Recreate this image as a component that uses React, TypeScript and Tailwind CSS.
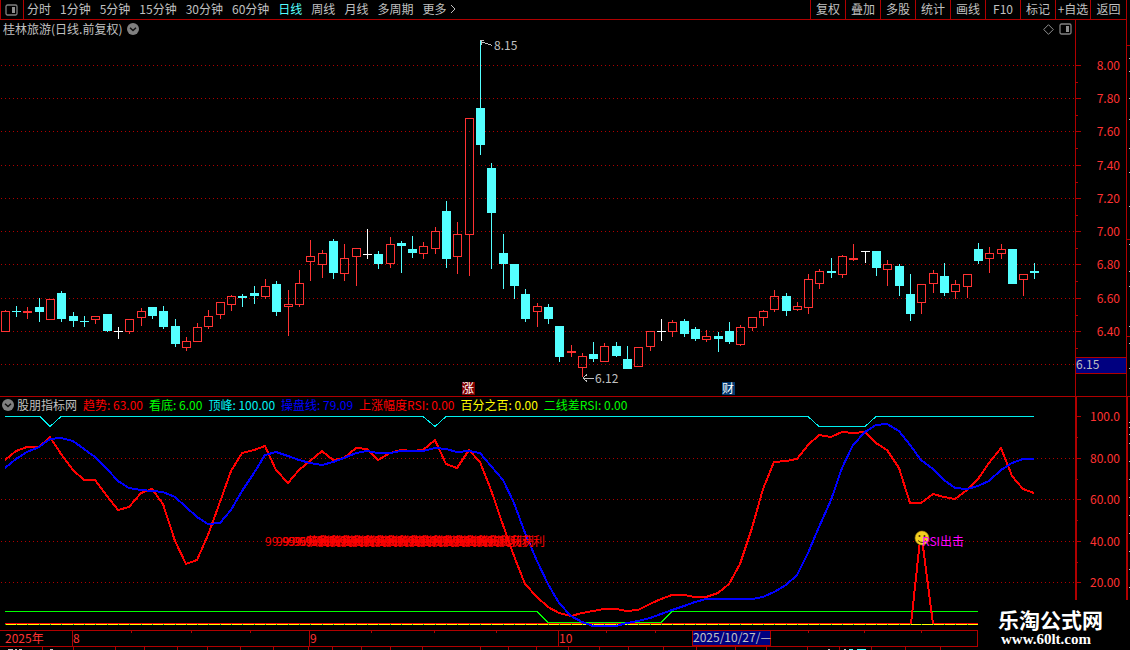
import React, { useState } from "react";

// r = rising (hollow red), c = falling (solid cyan), w = flat (white)
type Candle = ["r" | "c" | "w", number, number, number, number];

// kind, high, body top, body bottom, low
const candles: Candle[] = [
  ["r", 310, 311, 331, 331], ["c", 306, 311, 311, 316], ["r", 307, 311, 312, 318], ["c", 298, 307, 311, 321],
  ["r", 299, 299, 319, 319], ["c", 291, 293, 318, 321], ["c", 312, 316, 320, 326], ["c", 316, 321, 321, 326],
  ["r", 316, 316, 319, 323], ["c", 314, 314, 330, 331], ["w", 327, 331, 331, 338], ["r", 319, 319, 331, 333],
  ["r", 308, 311, 317, 325], ["c", 307, 307, 315, 318], ["c", 306, 311, 326, 328], ["c", 319, 326, 343, 346],
  ["r", 337, 341, 347, 350], ["r", 323, 327, 341, 341], ["r", 310, 316, 326, 328], ["r", 302, 302, 314, 318],
  ["r", 295, 296, 304, 310], ["c", 294, 296, 297, 306], ["c", 286, 293, 295, 303], ["r", 279, 286, 296, 298],
  ["c", 281, 284, 311, 315], ["r", 290, 304, 306, 335], ["r", 270, 283, 304, 306], ["r", 240, 256, 261, 280],
  ["r", 250, 253, 264, 277], ["c", 239, 241, 272, 278], ["r", 244, 258, 273, 280], ["r", 248, 248, 256, 285],
  ["w", 229, 254, 254, 258], ["c", 251, 254, 263, 268], ["r", 237, 244, 263, 267], ["c", 241, 243, 245, 272],
  ["c", 236, 249, 252, 257], ["r", 242, 246, 253, 258], ["r", 227, 231, 248, 253], ["c", 201, 211, 258, 267],
  ["r", 222, 234, 256, 273], ["r", 118, 118, 234, 275], ["c", 41, 108, 144, 154], ["c", 163, 168, 212, 268],
  ["c", 234, 253, 263, 288], ["c", 264, 264, 285, 298], ["c", 289, 294, 318, 321], ["r", 303, 306, 311, 326],
  ["c", 304, 307, 318, 323], ["c", 326, 326, 356, 361], ["r", 345, 351, 352, 356], ["r", 353, 356, 367, 376],
  ["c", 342, 354, 358, 361], ["r", 343, 346, 361, 361], ["c", 342, 346, 355, 356], ["c", 346, 359, 368, 368],
  ["r", 347, 347, 366, 366], ["r", 331, 331, 346, 350], ["w", 319, 331, 331, 340], ["r", 320, 322, 331, 336],
  ["c", 319, 321, 333, 336], ["c", 327, 329, 338, 340], ["r", 330, 336, 339, 341], ["c", 332, 336, 338, 351],
  ["c", 322, 331, 341, 343], ["r", 325, 327, 344, 345], ["r", 317, 317, 327, 330], ["r", 310, 311, 317, 325],
  ["r", 290, 296, 309, 311], ["c", 293, 296, 310, 315], ["r", 302, 306, 309, 310], ["r", 274, 279, 307, 313],
  ["r", 269, 271, 283, 288], ["c", 258, 271, 272, 277], ["r", 255, 256, 274, 277], ["r", 244, 258, 259, 260],
  ["w", 251, 251, 251, 262], ["c", 251, 251, 267, 275], ["r", 260, 264, 269, 285], ["c", 264, 266, 285, 295],
  ["c", 274, 294, 313, 320], ["r", 284, 284, 302, 313], ["r", 270, 273, 283, 292], ["c", 263, 276, 292, 295],
  ["r", 280, 284, 291, 298], ["r", 274, 274, 286, 297], ["c", 243, 249, 260, 263], ["r", 247, 253, 258, 272],
  ["r", 244, 249, 253, 258], ["c", 249, 249, 283, 283], ["r", 274, 274, 279, 295], ["c", 263, 271, 272, 278],
];

const trend = [
  460, 451, 447, 447, 437, 454, 470, 480, 480, 496, 510, 507, 493, 489, 504, 541, 564, 560, 535, 502, 471, 453, 450,
  446, 470, 483, 470, 461, 451, 460, 458, 448, 449, 460, 453, 450, 451, 450, 440, 464, 468, 450, 462, 490, 525, 556,
  584, 597, 607, 613, 616, 613, 611, 609, 609, 611, 610, 604, 599, 595, 595, 597, 597, 593, 584, 564, 528, 489, 462,
  461, 459, 445, 435, 437, 432, 433, 432, 443, 450, 468, 503, 503, 494, 497, 499, 490, 479, 463, 448, 476, 489, 493,
];

const control = [
  468, 459, 452, 447, 439, 438, 441, 449, 457, 469, 481, 488, 490, 491, 492, 497, 507, 517, 524, 523, 510, 491, 473,
  455, 452, 456, 460, 463, 465, 462, 458, 453, 451, 453, 453, 451, 451, 451, 448, 449, 452, 451, 453, 466, 480, 503,
  533, 561, 584, 603, 616, 622, 626, 626, 626, 623, 621, 618, 614, 610, 606, 602, 599, 599, 599, 599, 599, 597, 592,
  585, 575, 553, 527, 500, 468, 445, 432, 425, 424, 431, 445, 460, 469, 480, 488, 489, 486, 481, 470, 463, 459, 459,
];

const priceLabels: [string, number][] = [
  ["8.00", 65], ["7.80", 98], ["7.60", 131], ["7.40", 165], ["7.20", 198],
  ["7.00", 231], ["6.80", 264], ["6.60", 298], ["6.40", 331],
];

const indicatorLabels: [string, number][] = [
  ["100.0", 416], ["80.00", 458], ["60.00", 499], ["40.00", 541], ["20.00", 582],
];

const periods = ["分时", "1分钟", "5分钟", "15分钟", "30分钟", "60分钟", "日线", "周线", "月线", "多周期"];
const tools = ["复权", "叠加", "多股", "统计", "画线", "F10", "标记", "+自选", "返回"];

const readings = [
  { text: "趋势: 63.00", color: "text-[#ff0000]" },
  { text: "看底: 6.00", color: "text-[#00ff00]" },
  { text: "顶峰: 100.00", color: "text-[#00f0f0]" },
  { text: "操盘线: 79.09", color: "text-[#0000ff]" },
  { text: "上涨幅度RSI: 0.00", color: "text-[#ff0000]" },
  { text: "百分之百: 0.00", color: "text-[#ffff00]" },
  { text: "二线差RSI: 0.00", color: "text-[#00ff00]" },
];

const dateTicks = [131, 191, 250, 371, 434, 496, 606, 655, 808, 864, 921];
const stripTicks = [
  42, 73, 115, 144, 177, 207, 240, 273, 308, 332, 361, 390, 422, 480, 508, 536, 568, 599, 628, 663, 696, 735, 766,
  807, 839, 871, 905, 940,
];

const colors = { r: "#ff3232", c: "#54ffff", w: "#ffffff" };
const LINE = "#b00000";

const cx = (i: number) => Math.floor(5.3 + i * 11.315);
const toPoints = (ys: number[]) => ys.map((y, i) => `${cx(i)},${y}`).join(" ");

function PaneIcon() {
  return (
    <svg width="13" height="12" viewBox="0 0 13 12">
      <rect x="1" y="1" width="11" height="10" rx="1.5" fill="none" stroke="#808080" strokeWidth="1.3" />
      <rect x="7" y="3" width="3" height="6" fill="#909090" />
    </svg>
  );
}

function ChevronBadge() {
  return (
    <svg width="12" height="12" viewBox="0 0 12 12">
      <circle cx="6" cy="6" r="6" fill="#808080" />
      <path d="M3 4.7 L6 7.5 L9 4.7" fill="none" stroke="#101010" strokeWidth="1.5" />
    </svg>
  );
}

function GridLine({ y }: { y: number }) {
  return <line x1="1" x2="1075" y1={y + 0.5} y2={y + 0.5} stroke={LINE} strokeDasharray="1 3" shapeRendering="crispEdges" />;
}

function CandleShape({ data, x }: { data: Candle; x: number }) {
  const [kind, high, top, bottom, low] = data;
  const color = colors[kind];
  const hollow = kind === "r" && bottom - top > 1;
  return (
    <g fill={color}>
      {hollow ? (
        <>
          <rect x={x} y={high} width="1" height={top - high} />
          <rect x={x} y={bottom} width="1" height={low - bottom + 1} />
          <rect x={x - 3.5} y={top + 0.5} width="8" height={bottom - top} fill="none" stroke={color} />
        </>
      ) : (
        <>
          <rect x={x} y={high} width="1" height={low - high + 1} />
          <rect x={x - 4} y={top} width="9" height={bottom - top + 1} />
        </>
      )}
    </g>
  );
}

function PriceChart() {
  return (
    <svg viewBox="0 40 1130 356" className="block w-full overflow-visible text-[12px]">
      {priceLabels.map(([label, y]) => (
        <g key={label}>
          <GridLine y={y} />
          <rect x="1076" y={y} width="5" height="1" fill={LINE} />
          <rect x="1076" y={y + 17} width="2" height="1" fill={LINE} />
          <text x="1120" y={y + 5} textAnchor="end" fill="#ff3232">{label}</text>
        </g>
      ))}
      <GridLine y={364} />
      <rect x="1075" y="40" width="1" height="356" fill={LINE} />
      <rect x="1126" y="40" width="1" height="356" fill={LINE} />

      <g shapeRendering="crispEdges">
        {candles.map((c, i) => (
          <CandleShape key={i} data={c} x={cx(i)} />
        ))}
      </g>

      {/* highest and lowest price */}
      <g fill="none" stroke="#c0c0c0" shapeRendering="crispEdges">
        <path d="M481 41.5 L492 45.5 M480 40.5 H484 M481 41 V45" />
        <path d="M583 378.5 H594 M583 378 L587 374.5 M583 378 L587 381.5" />
      </g>
      <text x="494" y="50" fill="#c0c0c0">8.15</text>
      <text x="595" y="383" fill="#c0c0c0">6.12</text>

      <rect x="462" y="382" width="13" height="13" fill="#800000" />
      <text x="468" y="393" textAnchor="middle" fill="#ffffff">涨</text>
      <rect x="722" y="382" width="13" height="13" fill="#003870" />
      <text x="728" y="393" textAnchor="middle" fill="#ffffff">财</text>

      <rect x="1076" y="357" width="50" height="17" fill={LINE} />
      <rect x="1076" y="358" width="50" height="15" fill="#000080" />
      <text x="1076" y="369" fill="#c0c0c0">6.15</text>

      <g fill="#c0c0c0">
        {[58, 71, 98, 119, 148, 172, 206, 244, 271, 286, 326, 343, 368].map((y) => (
          <rect key={y} x="1129" y={y} width="1" height="1" />
        ))}
      </g>
      <rect x="1127" y="45" width="3" height="1" fill={LINE} />
      <rect x="1127" y="239" width="3" height="1" fill={LINE} />
      <rect x="1127" y="336" width="3" height="1" fill={LINE} />
    </svg>
  );
}

function IndicatorChart() {
  return (
    <svg viewBox="0 413 1130 237" className="block w-full overflow-visible text-[12px]">
      {indicatorLabels.map(([label, y], i) => (
        <g key={label}>
          {i > 0 && <GridLine y={y} />}
          <rect x="1077" y={y} width="4" height="1" fill={LINE} />
          <rect x="1077" y={y + 21} width="1" height="1" fill={LINE} />
          <text x="1120" y={y + 5} textAnchor="end" fill="#ff3232">{label}</text>
        </g>
      ))}
      <rect x="1075" y="413" width="2" height="187" fill={LINE} />
      <rect x="1126" y="413" width="2" height="187" fill={LINE} />
      <g fill="#c0c0c0">
        {[422, 427, 434, 443, 461, 479, 497, 515, 533, 551, 569, 587].map((y) => (
          <rect key={y} x="1129" y={y} width="1" height="1" />
        ))}
      </g>

      <g fill="none" shapeRendering="crispEdges">
        <polyline
          stroke="#00f0f0"
          points="5,416.5 40,416.5 50,426.5 61,416.5 423,416.5 435,426.5 446,416.5 808,416.5 819,426.5 865,426.5 876,416.5 1034,416.5"
        />
        <polyline stroke="#00ff00" points="5,611.5 537,611.5 548,622.5 661,622.5 672,611.5 978,611.5" />
        <path d="M5 624.5 H978" stroke="#ffff00" />
        <polyline stroke="#ff0000" points="5,623.5 910,623.5" />
        <polyline stroke="#ff0000" points="933,623.5 978,623.5" />
        <polyline stroke="#ff0000" strokeWidth="2" points={toPoints(trend)} />
        <polyline stroke="#0000ff" strokeWidth="2" points={toPoints(control)} />
        <polyline stroke="#ff0000" strokeWidth="2" points="911,624 921,531 933,624" />
      </g>
      {candles.slice(0, 86).map((_, i) => (
        <rect key={i} x={cx(i)} y="624" width="1" height="1" fill="#00c800" />
      ))}

      {candles.slice(23, 43).map((_, i) => (
        <text key={i} x={cx(i + 23)} y="546" fill="#ff0000">99.95%获利</text>
      ))}

      <circle cx="922" cy="538" r="7" fill="#f4d020" stroke="#a08010" strokeWidth="0.6" />
      <circle cx="919.5" cy="536" r="1" fill="#503000" />
      <circle cx="924.5" cy="536" r="1" fill="#503000" />
      <path d="M918 540.5 Q922 544.5 926 540.5" fill="none" stroke="#503000" />
      <text x="922" y="546" fill="#ff00ff">RSI出击</text>

      {/* date axis */}
      <g fill={LINE}>
        <rect x="0" y="630" width="978" height="1" />
        <rect x="0" y="646" width="978" height="1" />
        <rect x="977" y="630" width="1" height="17" />
        <rect x="72" y="631" width="1" height="15" />
        <rect x="309" y="631" width="1" height="15" />
        <rect x="558" y="631" width="1" height="15" />
        {dateTicks.map((x) => (
          <rect key={x} x={x} y="631" width="1" height="2" />
        ))}
        {stripTicks.map((x) => (
          <rect key={x} x={x} y="647" width="1" height="3" />
        ))}
      </g>
      <g fill="#ff3232">
        <text x="5" y="643">2025年</text>
        <text x="73" y="643">8</text>
        <text x="310" y="643">9</text>
        <text x="559" y="643">10</text>
      </g>
      <rect x="692" y="631" width="79" height="15" fill={LINE} />
      <rect x="693" y="631" width="77" height="14" fill="#000080" />
      <text x="693" y="642" fill="#c0c0c0">2025/10/27/—</text>
      <path d="M8 649.5 H13 M15 649.5 H17 M19 649.5 H22 M50 649.5 H53 M828 649.5 H830 M844 649.5 H846" stroke="#c0c0c0" />
      <path d="M849 649.5 H853 M857 649.5 H866" stroke="#54ffff" />
    </svg>
  );
}

export default function App() {
  const [period, setPeriod] = useState("日线");

  return (
    <main className="relative min-h-screen overflow-hidden bg-black font-['Noto_Sans_CJK_SC',sans-serif] text-[12px] leading-[16px] text-[#c0c0c0]">
      <nav className="flex h-5 whitespace-nowrap">
        <div className="flex flex-1 items-stretch border-b border-l border-[#b00000]">
          <button type="button" aria-label="侧栏" className="flex w-[23px] items-center justify-center border-r border-[#b00000] pr-[2px]">
            <PaneIcon />
          </button>
          <div className="flex flex-1 items-center gap-[9px] pb-[2px] pl-[3px]">
            {periods.map((p) => (
              <button
                key={p}
                type="button"
                onClick={() => setPeriod(p)}
                className={p === period ? "text-[#54ffff]" : ""}
              >
                {p}
              </button>
            ))}
            <button type="button" className="flex items-center gap-1">
              更多
              <svg width="6" height="10" viewBox="0 0 6 10" fill="none" stroke="#c0c0c0">
                <path d="M1 1 L5 5 L1 9" />
              </svg>
            </button>
          </div>
          {tools.map((t) => (
            <button key={t} type="button" className="w-[35px] border-l border-[#b00000] pb-[2px] text-center last:w-[36px]">
              {t}
            </button>
          ))}
        </div>
        <div className="w-1 border-l border-[#b00000]" />
      </nav>

      <header className="flex h-5">
        <div className="flex flex-1 items-center gap-[5px] pb-[2px] pl-[3px]">
          <h1>桂林旅游(日线.前复权)</h1>
          <button type="button" aria-label="展开">
            <ChevronBadge />
          </button>
          <button type="button" aria-label="标记" className="ml-auto">
            <svg width="11" height="11" viewBox="0 0 11 11" fill="none" stroke="#909090">
              <path d="M5.5 0.7 L10.3 5.5 L5.5 10.3 L0.7 5.5 Z" />
            </svg>
          </button>
          <button type="button" aria-label="窗口" className="mr-[3px]">
            <PaneIcon />
          </button>
        </div>
        <div className="w-[51px] border-l border-[#b00000]" />
        <div className="w-1 border-l border-[#b00000]" />
      </header>

      <PriceChart />

      <section className="border-t border-[#b00000]">
        <div className="flex h-4">
          <div className="flex flex-1 items-center gap-[6px] whitespace-nowrap pl-[2px]">
            <button type="button" aria-label="展开指标" className="-mr-[3px]">
              <ChevronBadge />
            </button>
            <h2>股朋指标网</h2>
            {readings.map((r) => (
              <span key={r.text} className={r.color}>{r.text}</span>
            ))}
          </div>
          <div className="w-[51px] border-l-2 border-[#b00000]" />
          <div className="w-1 border-l-2 border-[#b00000]" />
        </div>
        <IndicatorChart />
      </section>

      <footer className="absolute right-0 bottom-0 flex h-[50px] w-[152px] flex-col justify-end bg-black pb-[2px] pl-5 text-white">
        <strong className="text-[21px] leading-[22px] font-bold">乐淘公式网</strong>
        <a href="#" className="pl-[3px] font-['Liberation_Serif',serif] text-[15px] leading-[18px] font-bold">www.60lt.com</a>
      </footer>
    </main>
  );
}
